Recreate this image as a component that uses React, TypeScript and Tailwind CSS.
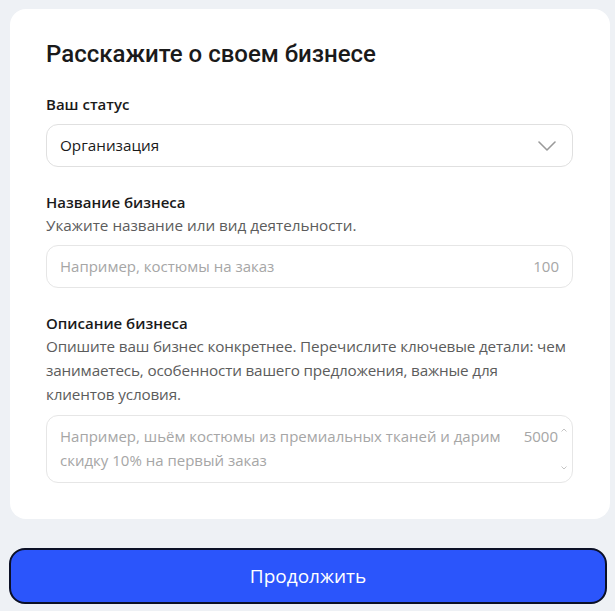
const font = { fontFamily: '"Open Sans", "Noto Sans", sans-serif' };

function Label({ children }: { children: React.ReactNode }) {
  return <div className="text-[15px] font-semibold leading-[22px] text-[#1a1a1a]">{children}</div>;
}

function Hint({ children, tight }: { children: React.ReactNode; tight?: boolean }) {
  return (
    <div
      className={
        tight
          ? 'text-[15.25px] leading-6 tracking-[-0.15px] text-[#5c5c5c]'
          : 'text-[15.25px] leading-6 text-[#5c5c5c]'
      }
    >
      {children}
    </div>
  );
}

export default function App() {
  return (
    <div className="min-h-[611px] bg-[#eef1f5] pl-[9px] pr-[5px] pt-[9px]" style={font}>
      <div className="ml-px rounded-2xl bg-white pl-[36px] pr-[37px] pt-[30px] pb-[36px]">
        <h1 className="font-['Roboto',sans-serif] text-[24px] font-medium leading-[31px] text-[#1a1a1a]">
          Расскажите о своем бизнесе
        </h1>

        <div className="mt-[23px]">
          <Label>Ваш статус</Label>
          <div className="mt-[9px] flex h-[43px] items-center justify-between rounded-xl border border-[#e0e0e0] pl-[13px] pr-[16px]">
            <span className="text-[15.25px] text-[#1a1a1a]">Организация</span>
            <svg width="18" height="10" viewBox="0 0 18 10" fill="none">
              <polyline points="1,1 9,9 17,1" stroke="#9a9a9a" strokeWidth="1.6" strokeLinecap="round" strokeLinejoin="round" />
            </svg>
          </div>
        </div>

        <div className="mt-[24px]">
          <Label>Название бизнеса</Label>
          <Hint>Укажите название или вид деятельности.</Hint>
          <div className="mt-[8px] flex h-[43px] items-center justify-between rounded-xl border border-[#e6e6e6] pl-[13px] pr-[13px]">
            <span className="text-[15px] text-[#a6a6a6]">Например, костюмы на заказ</span>
            <span className="text-[15px] text-[#a6a6a6]">100</span>
          </div>
        </div>

        <div className="mt-[24px]">
          <Label>Описание бизнеса</Label>
          <Hint tight>
            Опишите ваш бизнес конкретнее. Перечислите ключевые детали: чем занимаетесь, особенности вашего
            предложения, важные для
            <br />
            клиентов условия.
          </Hint>
          <div className="relative mt-[9px] flex h-[68px] justify-between rounded-xl border border-[#e6e6e6] pl-[13px] pr-[14px] pt-[8px]">
            <span className="max-w-[448px] text-[15px] leading-6 text-[#a6a6a6]">
              Например, шьём костюмы из премиальных тканей и дарим скидку 10% на первый заказ
            </span>
            <span className="text-[15px] leading-6 text-[#a6a6a6]">5000</span>
            <svg className="absolute right-[5px] top-[12px]" width="6" height="4" viewBox="0 0 6 4" fill="none">
              <polyline points="0.5,3.5 3,1 5.5,3.5" stroke="#c4c4c4" strokeWidth="1" />
            </svg>
            <svg className="absolute bottom-[12px] right-[5px]" width="6" height="4" viewBox="0 0 6 4" fill="none">
              <polyline points="0.5,0.5 3,3 5.5,0.5" stroke="#c4c4c4" strokeWidth="1" />
            </svg>
          </div>
        </div>
      </div>

      <button className="mt-[29px] flex h-[56px] w-[598px] items-center justify-center rounded-2xl border-2 border-[#0b1026] bg-[#2b55fb] text-[19px] font-medium text-white">
        Продолжить
      </button>
    </div>
  );
}
